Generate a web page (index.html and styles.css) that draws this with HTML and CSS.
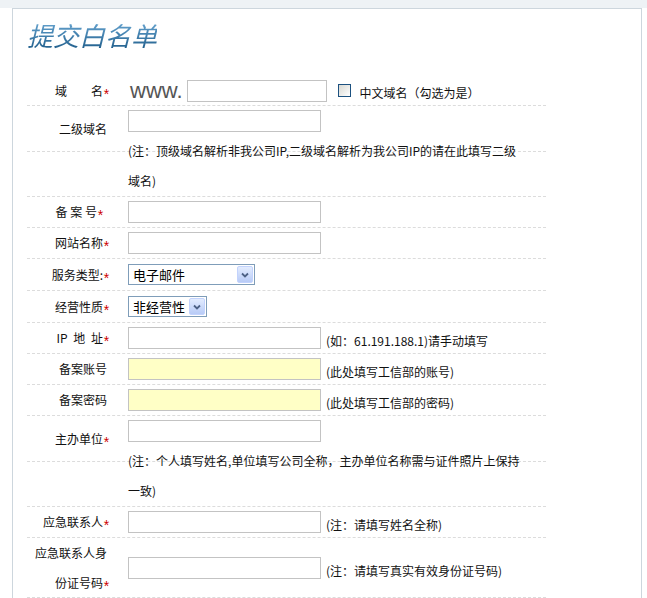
FILE: index.html
```html
<!DOCTYPE html>
<html lang="zh-CN">
<head>
	<meta charset="UTF-8">
	<title>提交白名单</title>
	<link rel="stylesheet" href="styles.css">
</head>
<body>
	<div class="topbar"></div>
	<div class="box">
		<h1 class="title"><span>提交白名单</span></h1>

		<div class="form">
			<div class="row first">
				<div class="label">域　　名<em class="req">*</em></div>
				<div class="field">
					<span class="www">www.</span>
					<input type="text" class="txt short">
					<span class="check"></span>
					<span class="tip">中文域名（勾选为是）</span>
				</div>
			</div>

			<div class="row tall">
				<div class="label nostar">二级域名</div>
				<div class="field"><input type="text" class="txt"></div>
			</div>
			<div class="note">(注：顶级域名解析非我公司IP,二级域名解析为我公司IP的请在此填写二级<br>域名)</div>

			<div class="row">
				<div class="label">备 案 号<em class="req">*</em><span class="pad"></span></div>
				<div class="field"><input type="text" class="txt"></div>
			</div>

			<div class="row">
				<div class="label">网站名称<em class="req">*</em></div>
				<div class="field"><input type="text" class="txt"></div>
			</div>

			<div class="row sel">
				<div class="label">服务类型:<em class="req">*</em></div>
				<div class="field">
					<div class="select">电子邮件<span class="arrow"><svg width="10" height="8" viewBox="0 0 10 8"><path d="M2 2.5 L5 5.5 L8 2.5" fill="none" stroke="#4d6185" stroke-width="1.8"/></svg></span></div>
				</div>
			</div>

			<div class="row sel">
				<div class="label">经营性质<em class="req">*</em></div>
				<div class="field">
					<div class="select small">非经营性<span class="arrow"><svg width="10" height="8" viewBox="0 0 10 8"><path d="M2 2.5 L5 5.5 L8 2.5" fill="none" stroke="#4d6185" stroke-width="1.8"/></svg></span></div>
				</div>
			</div>

			<div class="row">
				<div class="label wide">IP 地 址<em class="req">*</em></div>
				<div class="field">
					<input type="text" class="txt">
					<span class="hint">(如：61.191.188.1)请手动填写</span>
				</div>
			</div>

			<div class="row">
				<div class="label nostar">备案账号</div>
				<div class="field">
					<input type="text" class="txt yellow">
					<span class="hint">(此处填写工信部的账号)</span>
				</div>
			</div>

			<div class="row">
				<div class="label nostar">备案密码</div>
				<div class="field">
					<input type="password" class="txt yellow">
					<span class="hint">(此处填写工信部的密码)</span>
				</div>
			</div>

			<div class="row tall">
				<div class="label">主办单位<em class="req">*</em></div>
				<div class="field"><input type="text" class="txt"></div>
			</div>
			<div class="note">(注：个人填写姓名,单位填写公司全称，主办单位名称需与证件照片上保持<br>一致)</div>

			<div class="row">
				<div class="label">应急联系人<em class="req">*</em></div>
				<div class="field">
					<input type="text" class="txt">
					<span class="hint">(注：请填写姓名全称)</span>
				</div>
			</div>

			<div class="row big">
				<div class="label two"><span class="nostar">应急联系人身</span><br>份证号码<em class="req">*</em></div>
				<div class="field">
					<input type="text" class="txt">
					<span class="hint">(注：请填写真实有效身份证号码)</span>
				</div>
			</div>
		</div>
	</div>
</body>
</html>
```

FILE: styles.css
```css
body{margin:0;background:#fff;font:12px/20px "Noto Sans CJK SC","Liberation Sans",sans-serif;color:#111;}
.topbar{height:8px;background:#eef2f5;}
.box{margin-left:12px;width:628px;height:590px;border:1px solid #cdd6dd;border-bottom:0;overflow:hidden;}

.title{margin:0;padding:11px 0 24px 14px;font-size:26px;line-height:30px;font-weight:normal;font-style:italic;}
.title span{display:inline-block;background:linear-gradient(#6aa8d4,#1f5d8a);-webkit-background-clip:text;background-clip:text;color:transparent;}

.form{margin-left:14px;width:519px;}
.row{display:flex;align-items:center;box-sizing:border-box;height:31px;border-bottom:1px dashed #dcdcdc;}
.row.first{height:32px;padding-top:2px;}
.row.sel{height:32px;}
.row.tall{height:46px;align-items:flex-start;}
.row.tall .label{align-self:center;}
.row.tall .field{padding-top:4px;}
.row.big{height:60px;}

.label{box-sizing:border-box;flex:none;width:83px;text-align:right;white-space:nowrap;}
.label.nostar,.label .nostar{padding-right:3px;}
.label.wide{word-spacing:3px;}
.label.two{line-height:30px;}
.label .pad{display:inline-block;width:6px;}
.req{display:inline-block;width:7px;font-style:normal;font-size:14px;color:#c00;font-family:"Liberation Sans",sans-serif;text-align:center;vertical-align:-3px;line-height:12px;}

.field{flex:1;display:flex;align-items:center;padding-left:18px;}
.txt{box-sizing:border-box;width:193px;height:22px;margin:0;padding:0 3px;border:1px solid #c3c3c3;background:#fff;font:12px "Noto Sans CJK SC",sans-serif;outline:none;}
.txt.short{width:140px;}
.txt.yellow{background:#ffffc6;}

.www{margin:0 4px 0 2px;font:22px/22px "Liberation Sans",sans-serif;color:#555;}
.check{box-sizing:border-box;width:13px;height:13px;margin:0 9px 0 11px;border:1px solid #1c5180;background:linear-gradient(135deg,#d8d8d2,#fff);}
.tip{padding-top:4px;}
.hint{margin-left:5px;padding-top:6px;}

.note{box-sizing:border-box;height:61px;margin-top:-16px;padding-left:101px;line-height:30px;border-bottom:1px dashed #dcdcdc;}

.select{box-sizing:border-box;display:flex;align-items:center;justify-content:space-between;width:127px;height:21px;padding:0 1px 0 4px;border:1px solid #7f9db9;background:#fff;font-size:13px;color:#000;}
.select.small{width:79px;}
.arrow{box-sizing:border-box;display:flex;align-items:center;justify-content:center;width:16px;height:17px;border:1px solid #c3d3fd;border-radius:2px;background:linear-gradient(#e3ecfe,#b8cbf7);}
```
